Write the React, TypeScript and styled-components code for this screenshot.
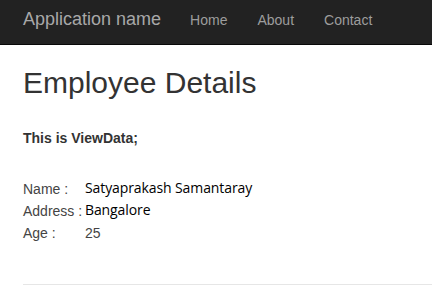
import React from "react";
import styled, { createGlobalStyle } from "styled-components";

const Global = createGlobalStyle`
  html, body { margin: 0; padding: 0; background: #fff; }
  body { font-family: "Liberation Sans", Arial, sans-serif; font-size: 14px; color: #333; }
  * { box-sizing: border-box; }
`;

const NavBar = styled.nav`
  height: 45px;
  background: #222;
  border-bottom: 1px solid #080808;
  display: flex;
  align-items: center;
  padding: 0 23px;
  padding-bottom: 5px;
`;

const Brand = styled.a`
  font-size: 18px;
  color: #a8a8a8;
  text-decoration: none;
  margin-right: 14px;
`;

const NavLink = styled.a`
  font-size: 14px;
  color: #9d9d9d;
  text-decoration: none;
  padding: 0 15px;
`;

const Body = styled.main`
  padding: 0 0 0 23px;
`;

const Title = styled.h2`
  font-size: 30px;
  font-weight: 500;
  margin: 21px 0 0;
  line-height: 33px;
  color: #333;
`;

const Sub = styled.h4`
  font-size: 14px;
  font-weight: bold;
  margin: 31px 0 0;
  line-height: 16px;
`;

const Details = styled.div`
  margin-top: 32px;
  display: grid;
  grid-template-columns: 62px auto;
  grid-auto-rows: 22px;
  align-items: center;
`;

const Label = styled.span`
  font-size: 14px;
  color: #444;
`;

const Value = styled.span<{ $alt?: boolean }>`
  font-family: ${(p) => (p.$alt ? '"Open Sans", "Noto Sans", sans-serif' : '"Liberation Sans", Arial, sans-serif')};
  font-size: 14px;
  color: ${(p) => (p.$alt ? "#000" : "#444")};
  letter-spacing: ${(p) => (p.$alt ? "-0.1px" : "0")};
  margin-top: ${(p) => (p.$alt ? "-3px" : "0")};
`;

const Rule = styled.hr`
  margin: 40px 0 0;
  border: 0;
  border-top: 1px solid #e6e6e6;
`;

export default function App() {
  return (
    <>
      <Global />
      <NavBar>
        <Brand href="#">Application name</Brand>
        <NavLink href="#">Home</NavLink>
        <NavLink href="#">About</NavLink>
        <NavLink href="#">Contact</NavLink>
      </NavBar>
      <Body>
        <Title>Employee Details</Title>
        <Sub>This is ViewData;</Sub>
        <Details>
          <Label>Name :</Label>
          <Value $alt>Satyaprakash Samantaray</Value>
          <Label>Address :</Label>
          <Value $alt>Bangalore</Value>
          <Label>Age :</Label>
          <Value>25</Value>
        </Details>
        <Rule />
      </Body>
    </>
  );
}
